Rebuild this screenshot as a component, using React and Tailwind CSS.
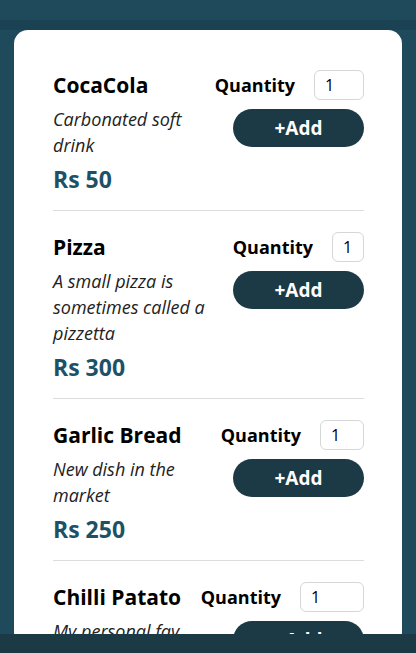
const items = [
  { name: "CocaCola", desc: "Carbonated soft drink", price: 50, inputW: "w-[50px]" },
  { name: "Pizza", desc: "A small pizza is sometimes called a pizzetta", price: 300, inputW: "w-[32px]" },
  { name: "Garlic Bread", desc: "New dish in the market", price: 250, inputW: "w-[44px]" },
  { name: "Chilli Patato", desc: "My personal fav", price: 150, inputW: "w-[64px]" },
];

function MenuItem({ item }) {
  return (
    <div className="border-b border-[#dcdcdc] pt-[21px] pb-[16px]">
      {/* title + quantity */}
      <div className="flex items-center justify-between">
        <h3 className="text-[21px] font-bold leading-[30px] text-black">{item.name}</h3>
        <div className="flex items-center gap-[19px]">
          <span className="text-[18px] font-bold text-black">Quantity</span>
          <input
            type="text"
            defaultValue="1"
            className={`${item.inputW} h-[30px] rounded-[6px] border border-[#d6d6d6] px-[10px] text-[16px] text-black outline-none`}
          />
        </div>
      </div>

      <div className="mt-[6px] flex items-start justify-between">
        <div className="w-[165px]">
          <p className="text-[18px] italic leading-[26px] text-[#222]">{item.desc}</p>
          <p className="mt-[6px] text-[23px] font-bold leading-[30px] text-[#1e5166]">Rs {item.price}</p>
        </div>
        <button className="mt-[3px] h-[38px] w-[131px] rounded-full bg-[#1b3a45] text-[19px] font-bold text-white">
          +Add
        </button>
      </div>
    </div>
  );
}

export default function App() {
  return (
    <div className="min-h-screen bg-[#1e4a5c] font-['Open_Sans',sans-serif]">
      <div className="h-[20px] bg-[#1e4a5c] shadow-[0_2px_8px_rgba(0,0,0,0.15)]" />
      <div className="h-[10px] bg-[#1b4252]" />

      <div className="mx-[14px] rounded-[14px] bg-white pt-[19px] pr-[38px] pb-[40px] pl-[39px]">
        {items.map((item) => (
          <MenuItem key={item.name} item={item} />
        ))}
      </div>

      {/* footer */}
      <div className="fixed bottom-0 left-0 right-0 h-[19px] bg-[#1b3a45]" />
    </div>
  );
}
